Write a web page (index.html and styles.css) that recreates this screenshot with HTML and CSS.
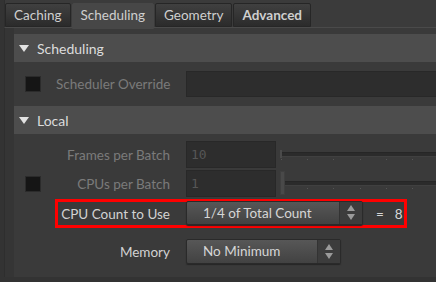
FILE: index.html
```html
<!DOCTYPE html>
<html lang="en">
<head>
<meta charset="UTF-8">
<title>Scheduling</title>
<link rel="stylesheet" href="styles.css">
</head>
<body>
<div class="tabs">
  <div class="tab">Caching</div>
  <div class="tab active">Scheduling</div>
  <div class="tab">Geometry</div>
  <div class="tab strong">Advanced</div>
</div>

<div class="frame">
  <div class="panel">
    <div class="section-head"><span class="arrow"></span>Scheduling</div>
    <div class="row override">
      <span class="check-cell"><span class="check"></span></span>
      <span class="label dim">Scheduler Override</span>
      <div class="field wide"></div>
    </div>

    <div class="section-head"><span class="arrow"></span>Local</div>
    <div class="local-body">
      <div class="row parm">
        <span class="check-cell"></span>
        <span class="label dim">Frames per Batch</span>
        <div class="field num">10</div>
        <div class="slider">
          <div class="track"></div>
          <div class="ticks"></div>
          <div class="knob thin"></div>
        </div>
      </div>
      <div class="row parm">
        <span class="check-cell"><span class="check"></span></span>
        <span class="label dim">CPUs per Batch</span>
        <div class="field num">1</div>
        <div class="slider">
          <div class="track"></div>
          <div class="ticks"></div>
          <div class="knob"></div>
        </div>
      </div>

      <div class="row highlight">
        <span class="label">CPU Count to Use</span>
        <div class="menu count">
          <span class="menu-text">1/4 of Total Count</span>
          <span class="menu-btn"><i class="up"></i><i class="down"></i></span>
        </div>
        <span class="result"><span>=</span><span>8</span></span>
      </div>

      <div class="row memory">
        <span class="check-cell"></span>
        <span class="label">Memory</span>
        <div class="menu mem">
          <span class="menu-text">No Minimum</span>
          <span class="menu-btn"><i class="up"></i><i class="down"></i></span>
        </div>
      </div>
    </div>
  </div>
</div>
</body>
</html>
```

FILE: styles.css
```css
body {
  margin: 0;
  background-color: #333333;
  font-family: Lato, "Open Sans", sans-serif;
  font-size: 13.5px;
  color: #d2d2d2;
  height: 282px;
  overflow: hidden;
  white-space: nowrap;
}

/* tab strip */
.tabs {
  display: flex;
  padding: 3px 0 0 0;
  height: 24px;
  margin-left: 4px;
  border-left: 1px solid #2e2e2e;
  border-bottom: 1px solid #4a4a4a;
  background-color: #3b3b3b;
}
.tab {
  height: 22px;
  line-height: 22px;
  padding: 0 8px;
  margin-right: 1px;
  border: 1px solid #262626;
  border-radius: 2px 2px 0 0;
  background: linear-gradient(#404040, #2b2b2b);
  color: #cfcfcf;
}
.tab.active {
  height: 24px;
  background: #474747;
  border-color: #474747;
  margin-bottom: -1px;
  padding: 0 8px;
}
.tab.strong {
  font-weight: bold;
  padding: 0 8px;
}

/* main frame */
.frame {
  margin-left: 4px;
  padding-left: 9px;
  background-color: #353535;
  border-left: 1px solid #2e2e2e;
}
.panel {
  background-color: #3a3a3a;
  padding-top: 6px;
  padding-bottom: 13px;
}
.section-head {
  display: flex;
  align-items: center;
  height: 28px;
  background-color: #4d4d4d;
  color: #dcdcdc;
  padding-left: 5px;
  font-size: 14px;
}
.arrow {
  width: 0;
  height: 0;
  border-left: 5px solid transparent;
  border-right: 5px solid transparent;
  border-top: 7px solid #e2e2e2;
  margin-right: 8px;
}

/* parameter rows */
.row {
  display: flex;
  align-items: center;
}
.check-cell {
  width: 42px;
  flex: none;
}
.check {
  display: block;
  width: 14px;
  height: 14px;
  margin-left: 11px;
  background-color: #151515;
  border: 1px solid #2b2b2b;
}
.label {
  width: 114px;
  flex: none;
  text-align: right;
  margin-right: 16px;
}
.label.dim {
  color: #7b7b7b;
}
.field {
  background-color: #2d2d2d;
  border: 1px solid #282828;
  box-sizing: border-box;
}
.override {
  height: 26px;
  padding-top: 9px;
  margin-bottom: 9px;
}
.field.wide {
  flex: 1;
  height: 26px;
  border-right: none;
}
.local-body {
  padding-top: 7px;
}
.parm {
  height: 27px;
  margin-bottom: 2px;
}
.field.num {
  width: 90px;
  height: 27px;
  padding-left: 4px;
  line-height: 25px;
  font-family: "DejaVu Sans Mono", monospace;
  font-size: 13px;
  color: #565656;
}

/* sliders */
.slider {
  flex: 1;
  position: relative;
  height: 27px;
  margin-left: 4px;
}
.track {
  margin-top: 11px;
  height: 3px;
  background-color: #2b2b2b;
  border-top: 1px solid #262626;
  border-bottom: 1px solid #404040;
}
.ticks {
  height: 1px;
  margin-top: 2px;
  background: repeating-linear-gradient(90deg, #555 0 1px, transparent 1px 26.2px);
  margin-left: 1px;
}
.knob {
  position: absolute;
  left: 0;
  top: 1px;
  width: 5px;
  height: 24px;
  background-color: #494949;
  border: 1px solid #3f3f3f;
  box-sizing: border-box;
}
.knob.thin {
  top: 9px;
  width: 2px;
  height: 8px;
  background-color: #4a4a4a;
  border: none;
}

/* highlighted row */
.highlight {
  margin-top: 1px;
  margin-left: 41px;
  width: 346px;
  height: 23px;
  border: 3px solid #ff0000;
}
.highlight .label {
  width: 112px;
}
.menu {
  display: flex;
  height: 24px;
  box-sizing: border-box;
  border: 1px solid #2a2a2a;
  border-radius: 2px;
  background: linear-gradient(#575757, #424242);
  box-shadow: 0 1px 1px #262626;
  color: #d6d6d6;
}
.menu.count {
  width: 177px;
  margin-top: -2px;
}
.menu.mem {
  width: 155px;
  height: 25px;
}
.menu-text {
  flex: 1;
  padding-left: 16px;
  line-height: 22px;
}
.menu-btn {
  width: 22px;
  display: flex;
  flex-direction: column;
  align-items: center;
  justify-content: center;
  gap: 3px;
  background-color: #3c3c3c;
  border-left: 1px solid #333;
}
.menu-btn i {
  width: 0;
  height: 0;
  border-left: 4px solid transparent;
  border-right: 4px solid transparent;
}
.menu-btn .up {
  border-bottom: 6px solid #9a9a9a;
}
.menu-btn .down {
  border-top: 6px solid #9a9a9a;
}
.result {
  display: flex;
  gap: 11px;
  margin-left: 13px;
  color: #d6d6d6;
}
.memory {
  margin-top: 11px;
  height: 25px;
}
```
